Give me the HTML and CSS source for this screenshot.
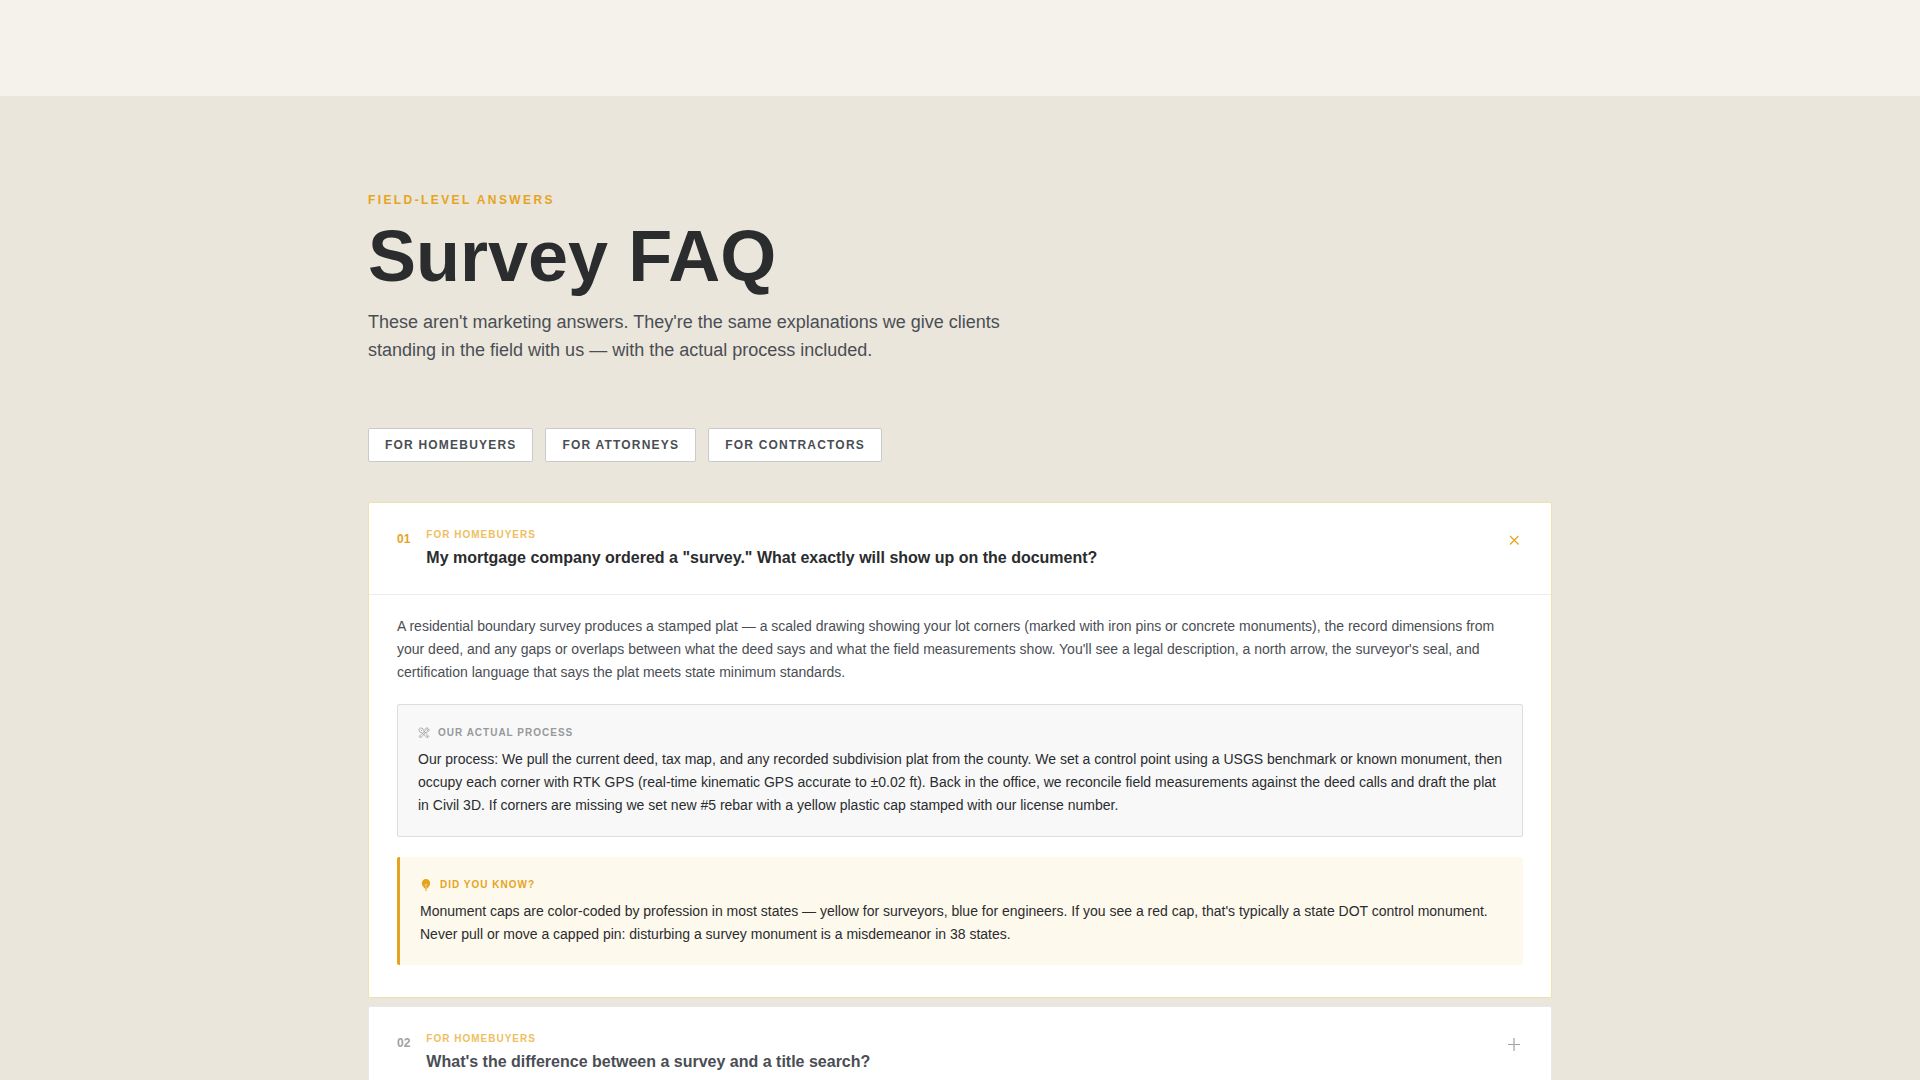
FILE: index.html
```html
<!DOCTYPE html>
<html lang="en">
<head>
    <meta charset="UTF-8">
    <meta name="viewport" content="width=device-width, initial-scale=1.0">
    <title>Survey FAQ</title>
    <link rel="stylesheet" href="styles.css">
</head>
<body>
    <main class="faq-section">
        <div class="container">
            <header class="faq-intro">
                <p class="eyebrow">Field-Level Answers</p>
                <h1>Survey FAQ</h1>
                <p class="lead">These aren't marketing answers. They're the same explanations we give clients standing in the field with us — with the actual process included.</p>
            </header>

            <div class="filters">
                <button type="button" class="filter-btn">For Homebuyers</button>
                <button type="button" class="filter-btn">For Attorneys</button>
                <button type="button" class="filter-btn">For Contractors</button>
            </div>

            <div class="faq-list">
                <article class="faq-item open">
                    <button type="button" class="faq-question" aria-expanded="true" aria-controls="answer-1">
                        <span class="faq-number">01</span>
                        <span class="faq-heading">
                            <span class="faq-tag">For Homebuyers</span>
                            <span class="faq-title">My mortgage company ordered a "survey." What exactly will show up on the document?</span>
                        </span>
                        <svg class="faq-toggle" viewBox="0 0 20 20" aria-hidden="true">
                            <path d="M7 5l8.500 8.500M15.500 5L7 13.500"/>
                        </svg>
                    </button>
                    <div class="faq-answer" id="answer-1">
                        <p class="answer-text">A residential boundary survey produces a stamped plat — a scaled drawing showing your lot corners (marked with iron pins or concrete monuments), the record dimensions from your deed, and any gaps or overlaps between what the deed says and what the field measurements show. You'll see a legal description, a north arrow, the surveyor's seal, and certification language that says the plat meets state minimum standards.</p>

                        <div class="note process">
                            <h2 class="note-label">
                                <!-- crossed hammer and wrench -->
                                <svg class="note-icon" viewBox="0 0 24 24" aria-hidden="true">
                                    <g fill="none" stroke="currentColor" stroke-width="1.500" stroke-linejoin="round">
                                        <path d="M1.500 5L5 1.500l5 2 1 4 10.500 11.500-3 3L7.500 11l-4-1z"/>
                                        <path d="M2 19L14 8c-1-4 2-7 6-6l-3 3.500 1.500 1.500L22 4c1 4-2 7-6 6L5 22z"/>
                                        <path d="M5 5l3 3M5 19h1M17 17l3 3"/>
                                    </g>
                                </svg>
                                Our Actual Process
                            </h2>
                            <p>Our process: We pull the current deed, tax map, and any recorded subdivision plat from the county. We set a control point using a USGS benchmark or known monument, then occupy each corner with RTK GPS (real-time kinematic GPS accurate to ±0.02 ft). Back in the office, we reconcile field measurements against the deed calls and draft the plat in Civil 3D. If corners are missing we set new #5 rebar with a yellow plastic cap stamped with our license number.</p>
                        </div>

                        <div class="note fact">
                            <h2 class="note-label">
                                <!-- light bulb -->
                                <svg class="note-icon" viewBox="0 0 24 24" aria-hidden="true">
                                    <path d="M12 0a8.500 8.500 0 0 0-8.500 8.500c0 4 3 6.500 5 9.500h7c2-3 5-5.500 5-9.500A8.500 8.500 0 0 0 12 0z" fill="currentColor"/>
                                    <path d="M9.500 19.500h5M10.500 22.500h3" stroke="currentColor" stroke-width="2"/>
                                    <path d="M10 10l2 2 2-2M12 12v6" fill="none" stroke="#fef9ed" stroke-width="1"/>
                                </svg>
                                Did You Know?
                            </h2>
                            <p>Monument caps are color-coded by profession in most states — yellow for surveyors, blue for engineers. If you see a red cap, that's typically a state DOT control monument. Never pull or move a capped pin: disturbing a survey monument is a misdemeanor in 38 states.</p>
                        </div>
                    </div>
                </article>

                <article class="faq-item">
                    <button type="button" class="faq-question" aria-expanded="false">
                        <span class="faq-number">02</span>
                        <span class="faq-heading">
                            <span class="faq-tag">For Homebuyers</span>
                            <span class="faq-title">What's the difference between a survey and a title search?</span>
                        </span>
                        <svg class="faq-toggle" viewBox="0 0 20 20" aria-hidden="true">
                            <path d="M11 3v13M5 9.500h12"/>
                        </svg>
                    </button>
                </article>
            </div>
        </div>
    </main>
</body>
</html>
```
FILE: styles.css
```css
* {
    box-sizing: border-box;
    margin: 0;
    padding: 0;
}

body {
    font-family: "Liberation Sans", Arial, sans-serif;
    color: #2a2c2e;
    background-color: #f5f2eb;
    padding-top: 96px;
}

button {
    font-family: inherit;
    cursor: pointer;
}

.faq-section {
    background-color: #eae6db;
    padding: 96px 0;
}

.container {
    max-width: 1280px;
    margin: 0 auto;
    padding: 0 48px;
}

.faq-intro {
    margin-bottom: 64px;
}

.eyebrow {
    font-size: 12px;
    line-height: 16px;
    font-weight: bold;
    letter-spacing: 0.2em;
    text-transform: uppercase;
    color: #e6a41e;
    margin-bottom: 12px;
}

h1 {
    font-size: 72px;
    line-height: 72px;
    margin-bottom: 16px;
}

.lead {
    max-width: 672px;
    font-size: 18px;
    line-height: 28px;
    color: #4a4e54;
}

.filters {
    display: flex;
    flex-wrap: wrap;
    gap: 12px;
    margin-bottom: 40px;
}

.filter-btn {
    font-size: 12px;
    line-height: 16px;
    font-weight: bold;
    letter-spacing: 0.1em;
    text-transform: uppercase;
    color: #4a4e54;
    background-color: white;
    border: 1px solid #c8cacc;
    border-radius: 2px;
    padding: 8px 16px;
}

.filter-btn:hover {
    border-color: #e6a41e;
}

.faq-list {
    display: flex;
    flex-direction: column;
    gap: 8px;
}

.faq-item {
    background-color: white;
    border: 1px solid #e8e8e8;
    border-radius: 2px;
}

.faq-item.open {
    border-color: #f2dfae;
}

.faq-question {
    width: 100%;
    display: flex;
    align-items: flex-start;
    gap: 16px;
    padding: 24px 28px;
    text-align: left;
    background: none;
    border: none;
}

.faq-number {
    font-size: 12px;
    line-height: 16px;
    font-weight: bold;
    color: #a0a2a4;
    padding-top: 4px;
}

.faq-heading {
    flex: 1;
}

.faq-tag {
    display: block;
    font-size: 10px;
    line-height: 15px;
    font-weight: bold;
    letter-spacing: 0.1em;
    text-transform: uppercase;
    color: #eec062;
    margin-bottom: 4px;
}

.faq-title {
    display: block;
    font-size: 16px;
    line-height: 24px;
    font-weight: bold;
    color: #4a4e54;
}

.faq-toggle {
    width: 20px;
    height: 20px;
    margin-top: 4px;
    fill: none;
    stroke: #a0a2a4;
    stroke-width: 1.2;
}

.open .faq-number {
    color: #e6a41e;
}

.open .faq-title {
    color: #2a2c2e;
}

.open .faq-toggle {
    stroke: #e6a41e;
}

.faq-answer {
    border-top: 1px solid #ededed;
    padding: 20px 28px 32px;
    font-size: 14px;
    line-height: 23px;
}

.answer-text {
    color: #4a4e54;
    margin-bottom: 20px;
}

.note {
    padding: 20px 20px 19px;
    border-radius: 2px;
}

.process {
    background-color: #f8f8f8;
    border: 1px solid #dcdddd;
    margin-bottom: 20px;
}

.fact {
    background-color: #fef9ed;
    border-left: 3px solid #e6a41e;
}

.note-label {
    display: flex;
    align-items: center;
    gap: 8px;
    font-size: 10px;
    line-height: 15px;
    letter-spacing: 0.1em;
    text-transform: uppercase;
    margin-bottom: 8px;
}

.note-icon {
    width: 12px;
    height: 12px;
}

.process .note-label {
    color: #97999b;
}

.fact .note-label {
    color: #e6a41e;
}
```
